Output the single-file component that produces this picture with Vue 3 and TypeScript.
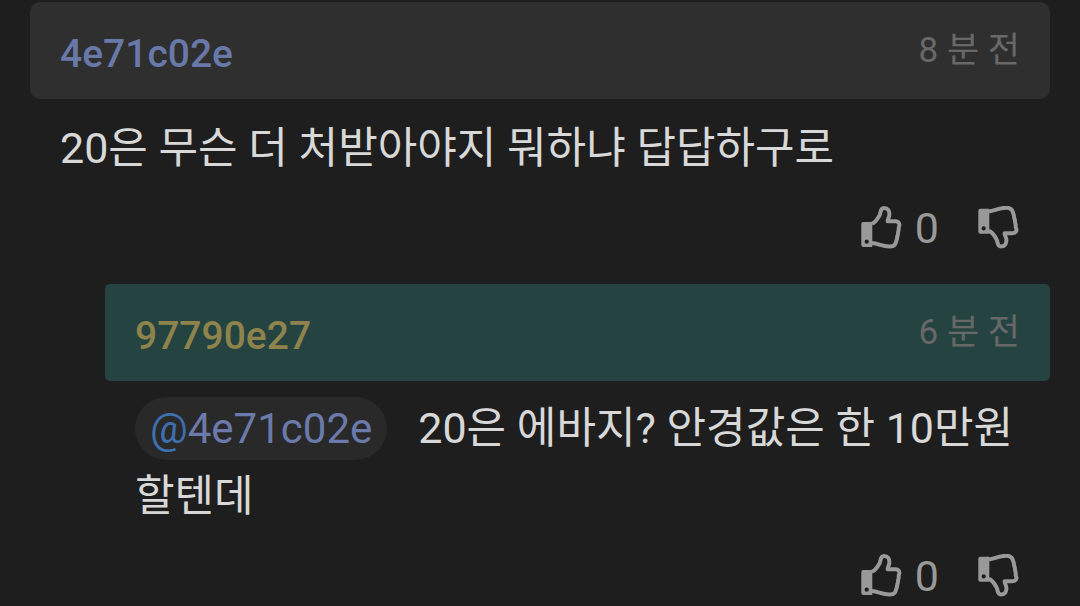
<script setup lang="ts">
interface Comment {
  id: number
  author: string
  time: string
  text: string
  likes: number
  mention?: string
  reply?: boolean
}

const comments: Comment[] = [
  {
    id: 1,
    author: '4e71c02e',
    time: '8 분 전',
    text: '20은 무슨 더 처받아야지 뭐하냐 답답하구로',
    likes: 0,
  },
  {
    id: 2,
    author: '97790e27',
    time: '6 분 전',
    text: '20은 에바지? 안경값은 한 10만원 할텐데',
    likes: 0,
    mention: '4e71c02e',
    reply: true,
  },
]
</script>

<template>
  <main class="thread">
    <article v-for="c in comments" :key="c.id" class="comment" :class="{ reply: c.reply }">
      <header class="head">
        <span class="author">{{ c.author }}</span>
        <time class="time">{{ c.time }}</time>
      </header>
      <p class="body">
        <a v-if="c.mention" class="mention" href="#"><span class="at">@</span><span>{{ c.mention }}</span></a><span>{{ c.text }}</span>
      </p>
      <footer class="actions">
        <button type="button" class="vote" aria-label="추천">
          <svg class="icon" viewBox="0 0 42 44" aria-hidden="true">
            <path
              class="cuff"
              fill-rule="evenodd"
              d="M2.3 16H11.3V41H2.3Q.3 41 .3 39V18Q.3 16 2.3 16ZM5.7 33.6A2.1 2.1 0 1 0 5.7 37.8A2.1 2.1 0 1 0 5.7 33.6Z"
            />
            <path
              class="hand"
              d="M11 17.6C14.5 16.5 17 12 18.6 9.2C19.8 7 19 2 23 2C27 2 28.6 5 28.4 8.5C28.3 11.5 26.6 12.6 26.6 15.3H34.5C38 15.3 39.2 18.5 38 20.6C37.2 22 38.2 23.5 37.4 25C36.6 26.5 37.4 28 36.6 29.5C35.8 31 36.4 32.5 35.6 34C34.6 38 34 40.5 29 40.6C21 40.8 17.5 37.5 11 37"
            />
          </svg>
          <span class="count">{{ c.likes }}</span>
        </button>
        <button type="button" class="vote" aria-label="비추천">
          <svg class="icon" viewBox="0 0 42 44" aria-hidden="true">
            <path
              class="cuff"
              fill-rule="evenodd"
              d="M2.3 2.7H11.3V27.7H2.3Q.3 27.7 .3 25.7V4.7Q.3 2.7 2.3 2.7ZM5.7 20.3A2.1 2.1 0 1 0 5.7 24.5A2.1 2.1 0 1 0 5.7 20.3Z"
            />
            <path
              class="hand"
              d="M11 5.4C17 4.6 21 1.6 29 1.8C34 2 34.8 5 35.6 8.6C36.4 10 35.8 11.5 36.6 13C37.4 14.5 36.6 16 37.4 17.5C38.2 19 37.2 20.5 38 22C39.2 24.5 38 27.2 34.5 27.2H26.6C26.6 30 28.4 31 28.4 34C28.6 37.5 27 40.6 23 40.6C19 40.6 19.8 35.5 18.6 33.4C17 30.5 14.5 26 11 25"
            />
          </svg>
        </button>
      </footer>
    </article>
  </main>
</template>

<style>
body {
  margin: 0;
  background: #1e1e1e;
}
</style>

<style scoped>
.thread {
  box-sizing: border-box;
  height: 100vh;
  overflow: hidden;
  padding: 2px 30px 0;
  background: #1e1e1e;
  color: #d8d8d8;
  font-family: Roboto, "Noto Sans CJK KR", sans-serif;
}

.reply {
  margin-left: 75px;
}

.head {
  box-sizing: border-box;
  display: flex;
  align-items: center;
  justify-content: space-between;
  height: 97px;
  padding: 0 30px;
  border-radius: 10px;
  background: #2f2f2f;
}

.reply .head {
  border-radius: 5px;
  background: #254441;
}

.author {
  color: #6879a8;
  font-size: 39px;
  font-weight: 500;
  line-height: 48px;
  padding-top: 6px;
}

.reply .author {
  color: #8e834c;
}

.time {
  color: #686868;
  font-size: 35px;
  line-height: 48px;
}

.body {
  margin: 0;
  padding: 15px 30px 0;
  font-size: 43px;
  line-height: 68px;
}

.reply .body {
  padding-top: 13px;
}

.mention {
  display: inline-flex;
  margin-right: 31px;
  padding: 0 15px;
  border-radius: 32px;
  background: #292929;
  color: #6b7aaa;
  font-size: 42px;
  line-height: 63px;
  text-decoration: none;
}

.at {
  color: #3f6fae;
}

.actions {
  display: flex;
  justify-content: flex-end;
  gap: 39px;
  padding: 24px 30px 34px;
}

.vote {
  display: flex;
  align-items: center;
  gap: 12px;
  height: 44px;
  padding: 0;
  border: 0;
  background: none;
  color: #999;
  font-family: inherit;
  font-size: 43px;
  line-height: 44px;
  cursor: pointer;
}

.icon {
  width: 42px;
  height: 44px;
}

.cuff {
  fill: #999;
}

.hand {
  fill: none;
  stroke: #999;
  stroke-width: 4;
  stroke-linejoin: round;
}
</style>
